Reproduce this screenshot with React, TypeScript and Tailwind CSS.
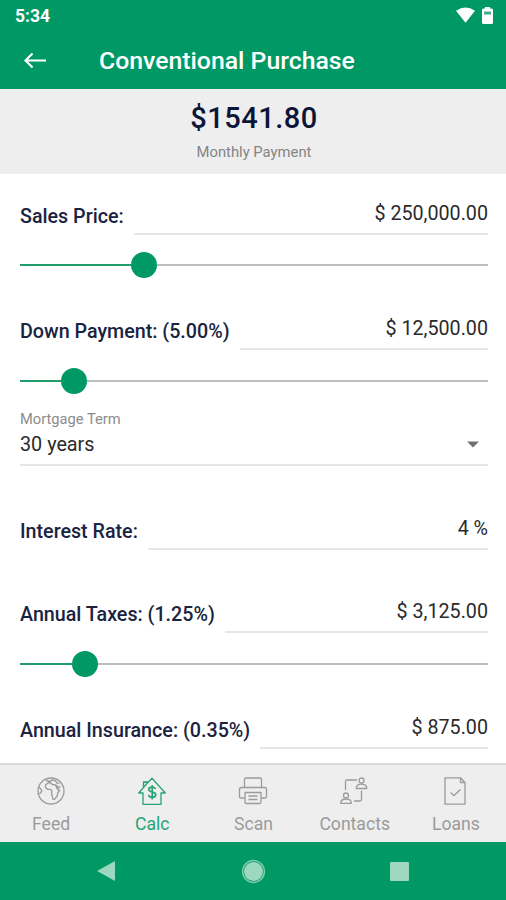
import { useState, type ReactNode } from 'react';

interface FieldProps {
  label: string;
  value: string;
  className: string;
}

function Field({ label, value, className }: FieldProps) {
  return (
    <div className={`flex shrink-0 items-end gap-[10px] text-[19.7px] leading-[22px] ${className}`}>
      <span className="shrink-0 pb-[7px] font-medium text-[#1a2340]">{label}</span>
      <span className="flex-1 border-b-2 border-[#e6e6e6] pb-[8px] text-right text-[#2a2a2a]">
        {value}
      </span>
    </div>
  );
}

function Slider({ percent, className }: { percent: number; className: string }) {
  return (
    <div className={`flex shrink-0 items-center ${className}`}>
      <div className="h-[2px] bg-[#1f9c69]" style={{ width: `calc(${percent}% - 13px)` }} />
      <div className="size-[26px] shrink-0 rounded-full bg-[#009966]" />
      <div className="h-[2px] flex-1 bg-[#bdbdbd]" />
    </div>
  );
}

const TABS: { name: string; icon: ReactNode }[] = [
  {
    name: 'Feed',
    icon: (
      <>
        <circle cx="15" cy="15" r="13" />
        <path d="M12.500 6.500 9.500 9v2.500l2 1.800h3.200l1 1.500v3.200l1.300 5.300h1.500l2.800-3.500.4-2.800 2-2.700-2.200-1-2-4.300-3.500-.7-1.300-1.500zM10 4.500l4.500.8 1.500-1.500 3.500 1 1.500 2.400h2.500M20 9l2.500 3 1.700-1.700M2.500 11l2 1.800 1.500 2-2.500 3.200" />
      </>
    ),
  },
  {
    name: 'Calc',
    icon: (
      <>
        <path d="M6 17v11.300h18V17h4.300L15 2.200l-4.300 4.500V6H6.500v5.500L1.700 17zM6.500 6l4.200.7-4.200 4.800" />
        <path d="M18.500 13.100c-.5-1.500-1.700-2-3.400-2-2 0-3.300.9-3.300 2.400 0 3.600 7 1.600 7 5.200 0 1.600-1.500 2.600-3.500 2.600-1.900 0-3.300-.7-3.800-2.300M15.200 9v14.500" strokeWidth="1.600" />
      </>
    ),
  },
  {
    name: 'Scan',
    icon: (
      <>
        <path d="M6.500 11.500V3.500Q6.500 2 8 2h14q1.500 0 1.500 1.500v8M6.500 22H3q-1.500 0-1.500-1.500v-7Q1.500 11.500 3.500 11.500h23q2 0 2 2v7Q28.500 22 27 22h-3.500" />
        <path d="M7 16.500h16v9.500q0 1.500-1.500 1.500h-13Q7 27.500 7 26zM10.500 20h9M10.500 23.500h9" />
      </>
    ),
  },
  {
    name: 'Contacts',
    icon: (
      <>
        <path d="M6.500 14V5.500Q6.500 4 8 4h10M22.500 14.500V23.500q0 1.500-1.500 1.500h-6" />
        <circle cx="22.500" cy="4.500" r="2.500" />
        <path d="M17.200 12.500c0-3 1.700-4.300 5.300-4.300s5.300 1.300 5.300 4.300z" />
        <circle cx="7" cy="19.500" r="2.500" />
        <path d="M1.700 27.300c0-3 1.700-4.300 5.300-4.300s5.300 1.300 5.300 4.300z" />
      </>
    ),
  },
  {
    name: 'Loans',
    icon: (
      <path d="M5 1.800h15.500L25 6.500v21.700H5zM20.500 1.800v4.700H25M10.500 16.500l3.500 3 6.500-6" />
    ),
  },
];

export default function App() {
  const [active, setActive] = useState('Calc');

  return (
    <div className="flex h-[900px] w-[506px] flex-col overflow-hidden bg-white font-['Roboto',sans-serif]">
      <header className="h-[89px] shrink-0 bg-[#009966] text-white">
        <div className="flex h-8 items-center pr-[13px] pl-[15px]">
          <span className="flex-1 text-[17.5px] font-bold">5:34</span>
          <svg className="mb-[2px]" width="19" height="16" viewBox="0 0 19 16" fill="currentColor">
            <path d="M0 3.800Q9.500-2.800 19 3.800L9.500 15.800z" />
          </svg>
          <svg className="mb-[2px] ml-[7px]" width="11" height="17" viewBox="0 0 11 17">
            <path fill="currentColor" d="M3 0h5v1.500h1.500Q11 1.500 11 3V15.500Q11 17 9.500 17h-8Q0 17 0 15.500V3Q0 1.500 1.500 1.500H3z" />
            <path fill="#3fae85" d="M2 4.500h7v3H2z" />
          </svg>
        </div>
        <div className="flex h-[57px] items-center pl-6">
          <svg width="22" height="16" viewBox="0 0 22 16" fill="none" stroke="currentColor" strokeWidth="2.200">
            <path d="M22 7.500H2M8.500 .5 1.500 7.500l7 7" />
          </svg>
          <h1 className="ml-[53px] text-[24.8px] font-medium">Conventional Purchase</h1>
        </div>
      </header>

      <section className="flex h-[85px] shrink-0 flex-col items-center bg-[#eeeeee] pt-[11px] pl-[2px]">
        <div className="text-[29px] leading-9 font-medium tracking-[0.5px] text-[#0c1538]">$1541.80</div>
        <div className="mt-[7px] text-[14.8px] leading-[18px] text-[#858585]">Monthly Payment</div>
      </section>

      <main className="flex min-h-0 flex-1 flex-col overflow-hidden pr-[18px] pl-5">
        <Field label="Sales Price:" value="$ 250,000.00" className="h-[61px]" />
        <Slider percent={26.5} className="h-[60px]" />
        <Field label="Down Payment: (5.00%)" value="$ 12,500.00" className="h-[55px]" />
        <Slider percent={11.5} className="h-[61px]" />
        <div className="flex h-[55px] shrink-0 items-end border-b-2 border-[#e6e6e6] pb-[7px]">
          <div className="flex-1">
            <div className="text-[14.7px] leading-[18px] text-[#8c8c8c]">Mortgage Term</div>
            <div className="mt-[5px] text-[19.8px] leading-6 text-[#2a2a2a]">30 years</div>
          </div>
          <svg className="mr-[9px] mb-[9px]" width="12" height="7" viewBox="0 0 12 7" fill="#707070">
            <path d="M0 .5h12L6 6.500z" />
          </svg>
        </div>
        <Field label="Interest Rate:" value="4 %" className="h-[84px]" />
        <Field label="Annual Taxes: (1.25%)" value="$ 3,125.00" className="h-[83px]" />
        <Slider percent={13.9} className="h-[61px]" />
        <Field label="Annual Insurance: (0.35%)" value="$ 875.00" className="h-[55px]" />
      </main>

      <nav className="grid h-[79px] shrink-0 grid-cols-5 border-t-2 border-[#dadada] bg-[#eeeeee]">
        {TABS.map(({ name, icon }) => (
          <button
            key={name}
            onClick={() => setActive(name)}
            className={`flex flex-col items-center pt-[11px] ${active === name ? 'text-[#27a474]' : 'text-[#9b9b9b]'}`}
          >
            <svg width="30" height="30" viewBox="0 0 30 30" fill="none" stroke="currentColor" strokeWidth="1.300" strokeLinejoin="round">
              {icon}
            </svg>
            <span className="mt-[7px] pl-px text-[17.6px] leading-[22px]">{name}</span>
          </button>
        ))}
      </nav>

      <footer className="flex h-[58px] shrink-0 items-center bg-[#009966] pl-[97px] text-[#9cd8c0]">
        <svg width="18" height="20" viewBox="0 0 18 20" fill="currentColor">
          <path d="M18 0v20L0 10z" />
        </svg>
        <svg className="ml-[126px]" width="25" height="25" viewBox="0 0 25 25">
          <circle cx="12.5" cy="12.5" r="9.5" fill="currentColor" />
          <circle cx="12.5" cy="12.5" r="10.900" fill="none" stroke="#7ccbad" strokeWidth="1.500" />
        </svg>
        <div className="ml-[124px] size-[19px] rounded-[1px] bg-[#9cd8c0]" />
      </footer>
    </div>
  );
}
